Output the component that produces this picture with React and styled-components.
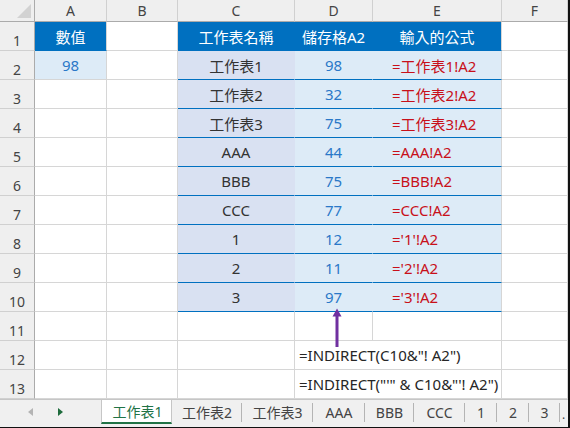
import React from 'react';
import styled, { createGlobalStyle } from 'styled-components';

const GlobalStyle = createGlobalStyle`
  html, body { margin: 0; padding: 0; background: #fff; }
  body { font-family: "Noto Sans", "Noto Sans CJK TC", sans-serif; }
  * { box-sizing: border-box; }
`;

const BLUE = '#0070c0';
const GRID = '#d6d6d6';
const NAME_FILL = '#d9e1f2';
const DATA_FILL = '#ddebf7';

const COLS = ['A', 'B', 'C', 'D', 'E', 'F'];

const kinds = {
  head: { fill: BLUE, ink: '#ffffff', line: BLUE, side: BLUE },
  name: { fill: NAME_FILL, ink: '#333333', line: BLUE, side: NAME_FILL },
  num: { fill: DATA_FILL, ink: '#2a78c8', line: BLUE, side: DATA_FILL },
  formula: { fill: DATA_FILL, ink: '#c8101a', line: BLUE, side: DATA_FILL, align: 'left' },
  note: { fill: '#ffffff', ink: '#262626', line: GRID, side: GRID, align: 'left' },
};

const tableRows = [
  ['工作表1', '98', '=工作表1!A2'],
  ['工作表2', '32', '=工作表2!A2'],
  ['工作表3', '75', '=工作表3!A2'],
  ['AAA', '44', '=AAA!A2'],
  ['BBB', '75', '=BBB!A2'],
  ['CCC', '77', '=CCC!A2'],
  ['1', '12', "='1'!A2"],
  ['2', '11', "='2'!A2"],
  ['3', '97', "='3'!A2"],
];

// each row: list of cells for columns A..F
const sheet = [
  [
    { text: '數值', kind: 'head', side: GRID },
    {},
    { text: '工作表名稱', kind: 'head' },
    { text: '儲存格A2', kind: 'head' },
    { text: '輸入的公式', kind: 'head', side: GRID },
    {},
  ],
  ...tableRows.map(([name, num, formula], i) => [
    i === 0 ? { text: '98', kind: 'num', line: GRID, side: GRID } : {},
    {},
    { text: name, kind: 'name' },
    { text: num, kind: 'num' },
    { text: formula, kind: 'formula', side: GRID },
    {},
  ]),
  [{}, {}, {}, {}, {}, {}],
  [{}, {}, {}, { text: '=INDIRECT(C10&"! A2")', kind: 'note', span: 2 }, {}],
  [{}, {}, {}, { text: '=INDIRECT("\'" & C10&"\'! A2")', kind: 'note', span: 2 }, {}],
];

const tabs = ['工作表1', '工作表2', '工作表3', 'AAA', 'BBB', 'CCC', '1', '2', '3'];
const tabWidths = [71, 70, 71, 52, 49, 51, 32, 32, 31];

const Window = styled.div`
  width: 570px;
  height: 428px;
  display: flex;
  flex-direction: column;
  border-right: 2px solid #111;
  border-bottom: 1px solid #111;
  overflow: hidden;
`;

const Sheet = styled.div`
  position: relative;
  display: grid;
  grid-template-columns: 35px 72px 71px 117px 78px 129px 1fr;
  grid-template-rows: 22px repeat(13, 29px);
  font-size: 15px;
  background: #fff;
`;

const Corner = styled.div`
  position: relative;
  background: #efefef;
  border-right: 1px solid #ababab;
  border-bottom: 1px solid #ababab;
  svg { position: absolute; right: 3px; bottom: 3px; }
`;

const ColHead = styled.div`
  display: flex;
  align-items: center;
  justify-content: center;
  background: #efefef;
  color: #444;
  font-size: 14px;
  border-right: 1px solid #d0d0d0;
  border-bottom: 1px solid #ababab;
`;

const RowHead = styled.div`
  display: flex;
  align-items: flex-end;
  justify-content: center;
  padding-bottom: 0;
  background: #efefef;
  color: #444;
  font-size: 14px;
  border-right: 1px solid #ababab;
  border-bottom: 1px solid #d0d0d0;
`;

const Cell = styled.div`
  display: flex;
  align-items: center;
  justify-content: ${(p) => (p.$align === 'left' ? 'flex-start' : 'center')};
  padding-left: ${(p) => (p.$align === 'left' ? p.$indent : 0)}px;
  grid-column: span ${(p) => p.$span};
  background: ${(p) => p.$fill};
  color: ${(p) => p.$ink};
  border-right: 1px solid ${(p) => p.$side};
  border-bottom: 1px solid ${(p) => p.$line};
  white-space: nowrap;
`;

const Arrow = styled.svg`
  position: absolute;
  left: 330px;
  top: 306px;
`;

const TabBar = styled.div`
  flex: 1;
  display: flex;
  background: #f0f0f0;
  border-top: 1px solid #c6c6c6;
  color: #444;
  font-size: 14px;
  overflow: hidden;
`;

const Nav = styled.div`
  width: 101px;
  flex: none;
  display: flex;
  align-items: center;
  gap: 25px;
  padding-left: 28px;
  padding-bottom: 3px;
`;

const Tab = styled.div`
  position: relative;
  flex: none;
  display: flex;
  align-items: center;
  justify-content: center;
  padding-bottom: 3px;
  ${(p) =>
    p.$active
      ? `
    margin-top: -1px;
    margin-bottom: 3px;
    padding-bottom: 0;
    padding-left: 2px;
    background: #fff;
    color: #217346;
    border-left: 1px solid #c6c6c6;
    border-right: 1px solid #c6c6c6;
    border-bottom: 2px solid #217346;
  `
      : `
    &::after {
      content: '';
      position: absolute;
      right: 0;
      top: 3px;
      bottom: 5px;
      width: 1px;
      background: #b4b4b4;
    }
  `}
`;

const More = styled.div`
  flex: none;
  width: 6px;
  padding-left: 2px;
  padding-bottom: 6px;
  display: flex;
  align-items: flex-end;
  font-size: 12px;
  line-height: 1;
  color: #444;
`;

export default function App() {
  return (
    <>
      <GlobalStyle />
      <Window>
        <Sheet>
          <Corner>
            <svg width="14" height="14" viewBox="0 0 14 14">
              <polygon points="14,0 14,14 0,14" fill="#d2d2d2" />
            </svg>
          </Corner>
          {COLS.map((c) => (
            <ColHead key={c}>{c}</ColHead>
          ))}
          {sheet.map((row, r) => (
            <React.Fragment key={r}>
              <RowHead>{r + 1}</RowHead>
              {row.map((cell, c) => {
                const k = kinds[cell.kind] || { fill: '#fff', ink: '#222', line: GRID, side: GRID };
                return (
                  <Cell
                    key={c}
                    $fill={k.fill}
                    $ink={k.ink}
                    $line={cell.line || k.line}
                    $side={cell.side || k.side}
                    $align={k.align}
                    $indent={cell.kind === 'note' ? 4 : 19}
                    $span={cell.span || 1}
                  >
                    {cell.text}
                  </Cell>
                );
              })}
            </React.Fragment>
          ))}
          <Arrow width="14" height="42" viewBox="0 0 14 42">
            <polygon points="7,2.5 2.5,10.5 11.5,10.5" fill="#7030a0" />
            <rect x="5.5" y="10" width="3" height="31" fill="#7030a0" />
          </Arrow>
        </Sheet>
        <TabBar>
          <Nav>
            <svg width="5" height="8" viewBox="0 0 5 8">
              <polygon points="5,0 5,8 0,4" fill="#b4b4b4" />
            </svg>
            <svg width="5" height="8" viewBox="0 0 5 8">
              <polygon points="0,0 0,8 5,4" fill="#1e6b3c" />
            </svg>
          </Nav>
          {tabs.map((t, i) => (
            <Tab key={t} $active={i === 0} style={{ width: tabWidths[i] }}>
              {t}
            </Tab>
          ))}
          <More>.</More>
        </TabBar>
      </Window>
    </>
  );
}
